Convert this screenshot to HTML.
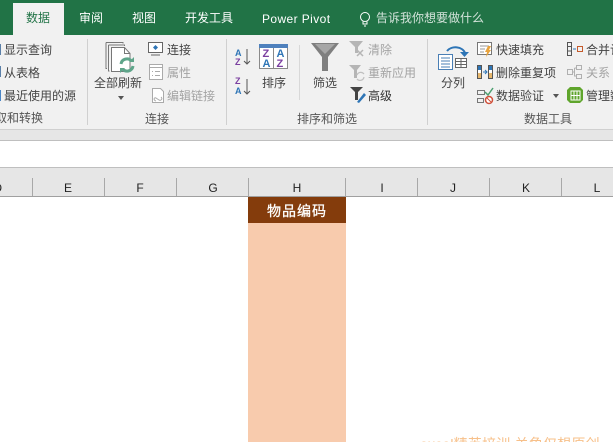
<!DOCTYPE html>
<html><head><meta charset="utf-8">
<style>
html,body{margin:0;padding:0;background:#fff}
#p{position:relative;width:613px;height:442px;overflow:hidden;background:#fff;font-family:"Liberation Sans","Noto Sans CJK SC",sans-serif}
.a{position:absolute}
.t{position:absolute;white-space:nowrap;font-size:12px;line-height:16px;color:#444}
.g{color:#a3a3a3}
.w{color:#fff;font-size:12px}
.c{position:absolute;top:178px;width:1px;height:18px;background:#a8a8a8}
.h{position:absolute;top:174px;height:22px;line-height:28px;font-size:12px;color:#222;text-align:center;width:20px}
svg{position:absolute;overflow:visible}
</style></head><body><div id="p">
<div class="a" style="left:0;top:0;width:613px;height:35px;background:#217346"></div>
<div class="a" style="left:13px;top:3px;width:51px;height:32px;background:#f1f1f1"></div>
<div class="t" style="left:26px;top:10px;color:#217346">数据</div>
<div class="t w" style="left:79px;top:10px">审阅</div>
<div class="t w" style="left:132px;top:10px">视图</div>
<div class="t w" style="left:185px;top:10px">开发工具</div>
<div class="t w" style="left:262px;top:11px;letter-spacing:.4px;font-size:12px">Power Pivot</div>
<svg style="left:358px;top:11px" width="14" height="16" fill="none" stroke="#fff"><circle cx="7" cy="6" r="4.5"/><path d="M5 10.5v2.5h4v-2.5M6 15h2"/></svg>
<div class="t" style="left:376px;top:10px;color:#d3e3da">告诉我你想要做什么</div>

<div class="a" style="left:0;top:35px;width:613px;height:94px;background:#f1f1f1"></div>
<div class="a" style="left:87px;top:39px;width:1px;height:86px;background:#d0d0d0"></div>
<div class="a" style="left:226px;top:39px;width:1px;height:86px;background:#d0d0d0"></div>
<div class="a" style="left:299px;top:45px;width:1px;height:55px;background:#d8d8d8"></div>
<div class="a" style="left:427px;top:39px;width:1px;height:86px;background:#d0d0d0"></div>

<div class="a" style="left:0;top:44px;width:1px;height:11px;background:#5a7fa8"></div>
<div class="a" style="left:0;top:66px;width:1px;height:11px;background:#5a7fa8"></div>
<div class="a" style="left:0;top:90px;width:1px;height:11px;background:#4a85c5"></div>
<div class="t" style="left:4px;top:42px">显示查询</div>
<div class="t" style="left:4px;top:65px">从表格</div>
<div class="t" style="left:4px;top:88px">最近使用的源</div>
<div class="t" style="left:-5px;top:110px;color:#555">取和转换</div>

<svg style="left:105px;top:42px" width="30" height="32" fill="#fff" stroke="#777"><path d="M1 .5h17v1M1 .5v26h1"/><path d="M3.5 3h16v1M3.5 3v26h1"/><path d="M6.5 5.5h13l5.5 6v18h-18.500z"/><path d="M19.5 5.5v6h5.500" fill="none"/></svg>
<svg style="left:119px;top:57px" width="16" height="16" fill="none" stroke="#5fa58a" stroke-width="3"><path d="M2 7a6 6 0 0 1 10.500-3"/><path d="M14 9a6 6 0 0 1-10.500 3"/><path d="M10 5h5V0z" fill="#5fa58a" stroke="none"/><path d="M6 11H1v5z" fill="#5fa58a" stroke="none"/></svg>
<div class="t" style="left:94px;top:75px">全部刷新</div>
<div class="a" style="left:118px;top:96px;border:3px solid transparent;border-top:4px solid #555"></div>
<svg style="left:148px;top:42px" width="16" height="14" fill="#fff" stroke="#666"><rect x=".5" y=".5" width="14" height="10"/><path d="M3 13h9"/><path d="M7.5 3l2.500 2.500-2.500 2.500-2.500-2.500z" fill="#2e75b6" stroke="none"/></svg>
<div class="t" style="left:167px;top:42px">连接</div>
<svg style="left:149px;top:64px" width="15" height="16" fill="#fff" stroke="#aaa"><rect x=".5" y=".5" width="13" height="15"/><path d="M.5 3.5h13M6 7.500h5M6 11.500h5M3 7.500h1M3 11.500h1"/></svg>
<div class="t g" style="left:167px;top:65px">属性</div>
<svg style="left:151px;top:88px" width="15" height="16" fill="#fff" stroke="#aaa"><path d="M1.5.5h8l3 3v11h-11z"/><path d="M5 13c-3-1-2-4 0-3l3 2c2 1 4-1 2-3" fill="none"/></svg>
<div class="t g" style="left:167px;top:88px">编辑链接</div>
<div class="t" style="left:145px;top:111px;color:#555">连接</div>

<svg style="left:235px;top:48px;font:bold 9px 'Liberation Sans'" width="18" height="50">
<text x="0" y="8" fill="#2e75b6">A</text><text x="0" y="17" fill="#7a3fa0">Z</text>
<path d="M12 1v15M9 13l3 3 3-3" stroke="#555" fill="none"/>
<text x="0" y="36" fill="#7a3fa0">Z</text><text x="0" y="46" fill="#2e75b6">A</text>
<path d="M12 31v15M9 43l3 3 3-3" stroke="#555" fill="none"/></svg>
<svg style="left:259px;top:44px;font:bold 11px 'Liberation Sans'" width="30" height="26">
<rect x=".5" y=".5" width="28" height="24" fill="#fff" stroke="#8a8a8a"/><rect x="0" y="0" width="29" height="4" fill="#4f81bd"/><path d="M14.5 4v20" stroke="#8a8a8a"/>
<text x="3.5" y="13" fill="#7a3fa0">Z</text><text x="17.5" y="13" fill="#2e75b6">A</text><text x="3.5" y="23" fill="#2e75b6">A</text><text x="17.5" y="23" fill="#7a3fa0">Z</text></svg>
<div class="t" style="left:262px;top:75px">排序</div>
<svg style="left:311px;top:43px" width="28" height="28"><path d="M0 0h28L17 14v14h-6V14z" fill="#7f7f7f"/><path d="M4 1h20l-10 10z" fill="#a6a6a6"/></svg>
<div class="t" style="left:313px;top:75px">筛选</div>
<svg style="left:349px;top:41px" width="16" height="16"><path d="M0 0h14L9 6v6H6V6z" fill="#b5b5b5"/><path d="M8 9l6 6M14 9l-6 6" stroke="#b5b5b5" stroke-width="1.5"/></svg>
<div class="t g" style="left:368px;top:42px">清除</div>
<svg style="left:349px;top:65px" width="16" height="16" fill="none"><path d="M0 0h12L8 5v8H5V5z" fill="#b5b5b5"/><path d="M8 10a4 4 0 0 1 7-1M15 12a4 4 0 0 1-7 2" stroke="#c0c0c0" stroke-width="1.2"/></svg>
<div class="t g" style="left:368px;top:65px">重新应用</div>
<svg style="left:350px;top:87px" width="16" height="16"><path d="M0 0h13L8 5v8H5V5z" fill="#444"/><path d="M7 15l7-9 2 2-7 8z" fill="#2e75b6"/></svg>
<div class="t" style="left:368px;top:88px;color:#333">高级</div>
<div class="t" style="left:297px;top:111px;color:#555">排序和筛选</div>

<svg style="left:438px;top:42px" width="30" height="30" fill="none"><path d="M9 9a10 8 0 0 1 18 2" stroke="#2e75b6" stroke-width="2"/><path d="M22 10h9l-4.500 5z" fill="#2e75b6"/><rect x=".5" y="12.500" width="14" height="15" fill="#fff" stroke="#4a7fb5"/><path d="M3 16h9M3 19h9M3 22h9M3 25h9" stroke="#4a7fb5"/><rect x="17.500" y="16.500" width="11" height="9" fill="#fff" stroke="#666"/><path d="M17.500 19.500h11M17.500 22.500h11M23 16.500v9" stroke="#666"/></svg>
<div class="t" style="left:441px;top:75px">分列</div>
<svg style="left:477px;top:42px" width="16" height="15" fill="none"><rect x=".5" y=".5" width="14" height="12" stroke="#777" fill="#fff"/><path d="M3 4h9M3 7h5M3 10h4" stroke="#999"/><path d="M11 4l-3 6h2l-1 5 5-7h-2l2-4z" fill="#e8a33d"/></svg>
<div class="t" style="left:496px;top:42px">快速填充</div>
<svg style="left:477px;top:65px" width="16" height="15"><rect x=".5" y=".5" width="4" height="13" fill="#fff" stroke="#555"/><rect x="1" y="1" width="3" height="4" fill="#2e75b6"/><rect x="1" y="8" width="3" height="5" fill="#e8b86d"/><rect x="11.500" y=".5" width="4" height="13" fill="#fff" stroke="#555"/><rect x="12" y="1" width="3" height="4" fill="#2e75b6"/><rect x="12" y="8" width="3" height="5" fill="#e8b86d"/><path d="M6 7h4M8 5l2 2-2 2" stroke="#2e75b6" fill="none"/></svg>
<div class="t" style="left:496px;top:65px">删除重复项</div>
<svg style="left:477px;top:87px" width="16" height="17" fill="none"><path d="M.5 3.5h7v4h-7zM.5 11.5h6v4h-6z" stroke="#777"/><path d="M8 5l3 3 5-7" stroke="#4c9f70" stroke-width="1.5"/><circle cx="12" cy="13" r="3.500" fill="#fff" stroke="#d0503a" stroke-width="1.5"/><path d="M10 11l4 4" stroke="#d0503a"/></svg>
<div class="t" style="left:496px;top:88px">数据验证</div>
<div class="a" style="left:553px;top:94px;border:3px solid transparent;border-top:4px solid #555"></div>
<svg style="left:567px;top:42px" width="16" height="15" fill="none"><path d="M.5.5h4v13h-4zM.5 4.500h4M.5 9h4" stroke="#555"/><path d="M6 7h3" stroke="#2e75b6"/><rect x="10.500" y="4.500" width="5" height="5" stroke="#c55a2b"/></svg>
<div class="t" style="left:586px;top:42px">合并计算</div>
<svg style="left:567px;top:65px" width="16" height="15" fill="none" stroke="#b0b0b0"><rect x=".5" y="4.500" width="5" height="5"/><rect x="9.500" y=".5" width="5" height="4"/><rect x="9.500" y="9.500" width="5" height="4"/><path d="M5.500 7h2M7.500 3v8h2M7.500 3h2"/></svg>
<div class="t g" style="left:586px;top:65px">关系</div>
<svg style="left:567px;top:87px" width="16" height="16"><path d="M3 0h10l3 3v10l-3 3H3l-3-3V3z" fill="#5fa52c"/><rect x="4" y="4" width="9" height="9" fill="none" stroke="#fff"/><path d="M7 4v9M10 4v9M4 8.500h9" stroke="#fff"/></svg>
<div class="t" style="left:586px;top:88px">管理数据模型</div>
<div class="t" style="left:524px;top:111px;color:#555">数据工具</div>

<div class="a" style="left:0;top:129px;width:613px;height:1px;background:#d0d0d0"></div>
<div class="a" style="left:0;top:130px;width:613px;height:10px;background:#e6e6e6"></div>
<div class="a" style="left:0;top:140px;width:613px;height:1px;background:#bfbfbf"></div>
<div class="a" style="left:0;top:167px;width:613px;height:1px;background:#bfbfbf"></div>
<div class="a" style="left:0;top:168px;width:613px;height:28px;background:#e6e6e6"></div>
<div class="a" style="left:0;top:196px;width:613px;height:1px;background:#a0a0a0"></div>
<div class="c" style="left:32px"></div><div class="c" style="left:104px"></div><div class="c" style="left:176px"></div><div class="c" style="left:248px"></div><div class="c" style="left:345px"></div><div class="c" style="left:417px"></div><div class="c" style="left:489px"></div><div class="c" style="left:561px"></div>
<div class="h" style="left:-8px;width:10px;text-align:right">D</div>
<div class="h" style="left:58px">E</div><div class="h" style="left:130px">F</div><div class="h" style="left:203px">G</div><div class="h" style="left:287px">H</div><div class="h" style="left:372px">I</div><div class="h" style="left:443px">J</div><div class="h" style="left:516px">K</div><div class="h" style="left:587px">L</div>

<div class="a" style="left:248px;top:197px;width:98px;height:26px;background:#843c0c"></div>
<div class="a" style="left:248px;top:223px;width:98px;height:219px;background:#f8cbad"></div>
<div class="t" style="left:248px;width:98px;top:203px;text-align:center;color:#fff;font-size:14px;letter-spacing:1px;-webkit-text-stroke:.3px #fff">物品编码</div>
<div class="t" style="left:420px;top:436px;color:#f7c08a;font-size:14px;letter-spacing:.2px">excel精英培训 关角仅想原创</div>
</div></body></html>
